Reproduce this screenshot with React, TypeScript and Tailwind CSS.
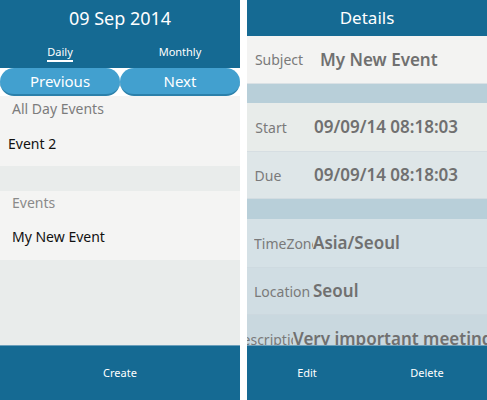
const font = { fontFamily: '"Noto Sans", "Open Sans", sans-serif' }

function DetailRow({
  label,
  value,
  bg,
  h,
  labelW,
  gap,
  align = 'justify-center',
}: {
  label: string
  value: string
  bg: string
  h: string
  labelW: string
  gap: string
  align?: string
}) {
  return (
    <div className={`${bg} ${h} shrink-0 flex items-center pl-[7px] whitespace-nowrap border-b border-[#c9d6dc]/60`}>
      <div className={`${labelW} overflow-hidden flex ${align} shrink-0`}>
        <span className="text-[14px] text-[#7a7a7a]">{label}</span>
      </div>
      <span className={`${gap} text-[17px] font-semibold text-[#707070]`}>{value}</span>
    </div>
  )
}

export default function App() {
  return (
    <div className="w-[487px] h-[400px] bg-white flex justify-between overflow-hidden" style={font}>
      {/* Day view */}
      <div className="w-[240px] h-full flex flex-col bg-[#f4f4f3]">
        <div className="h-[68px] bg-[#156a93] flex flex-col text-white">
          <div className="h-[37px] flex items-center justify-center text-[18px]">09 Sep 2014</div>
          <div className="flex-1 flex">
            <div className="flex-1 flex justify-center">
              <span className="text-[11px] pt-[8px] border-b-2 border-white h-[25px] leading-[14px]">Daily</span>
            </div>
            <div className="flex-1 flex justify-center">
              <span className="text-[11px] pt-[8px] leading-[14px]">Monthly</span>
            </div>
          </div>
        </div>
        <div className="h-[28px] flex bg-white">
          <button className="w-[120px] h-full rounded-full bg-[#42a0cf] border-b-2 border-[#2b80aa] text-white text-[15px]">
            Previous
          </button>
          <button className="w-[120px] h-full rounded-full bg-[#42a0cf] border-b-2 border-[#2b80aa] text-white text-[15px]">
            Next
          </button>
        </div>
        <div className="h-[24px] flex items-center px-[12px] text-[14px] text-[#7c7c7c]">All Day Events</div>
        <div className="h-[46px] flex items-center px-[8px] text-[14px] text-[#111]">Event 2</div>
        <div className="h-[25px] bg-[#e9eceb]" />
        <div className="h-[22px] flex items-center px-[12px] text-[14px] text-[#8a8a8a]">Events</div>
        <div className="h-[47px] flex items-center px-[12px] text-[14px] text-[#111]">My New Event</div>
        <div className="flex-1 bg-[#e9eceb]" />
        <div className="h-[55px] bg-[#156a93] border-t border-[#6b9fbb] flex items-center justify-center text-white text-[11px]">
          Create
        </div>
      </div>

      {/* Details */}
      <div className="w-[240px] h-full flex flex-col">
        <div className="h-[36px] bg-[#156a93] flex items-center justify-center text-white text-[17px]">Details</div>
        <div className="flex-1 flex flex-col overflow-hidden">
          <DetailRow label="Subject" value="My New Event" bg="bg-[#f3f3f2]" h="h-[48px]" labelW="w-[50px]" gap="ml-[16px]" />
          <div className="h-[19px] shrink-0 bg-[#b8cfd9]" />
          <DetailRow label="Start" value="09/09/14 08:18:03" bg="bg-[#e8ecea]" h="h-[49px]" labelW="w-[34px]" gap="ml-[26px]" />
          <DetailRow label="Due" value="09/09/14 08:18:03" bg="bg-[#dee6e8]" h="h-[47px]" labelW="w-[28px]" gap="ml-[32px]" />
          <div className="h-[20px] shrink-0 bg-[#b8cfd9]" />
          <DetailRow label="TimeZone" value="Asia/Seoul" bg="bg-[#d5e1e6]" h="h-[49px]" labelW="w-[59px]" gap="ml-0" align="justify-start" />
          <DetailRow label="Location" value="Seoul" bg="bg-[#d0dde3]" h="h-[47px]" labelW="w-[58px]" gap="ml-[1px]" align="justify-start" />
          <div className="h-[48px] shrink-0 bg-[#c9d8df] flex items-center whitespace-nowrap">
            <div className="w-[46px] overflow-hidden flex justify-center shrink-0">
              <span className="text-[14px] text-[#7a7a7a]">Description</span>
            </div>
            <span className="text-[17px] font-semibold text-[#707070]">Very important meeting</span>
          </div>
        </div>
        <div className="h-[55px] bg-[#156a93] border-t border-[#6b9fbb] flex text-white text-[11px]">
          <div className="flex-1 flex items-center justify-center">Edit</div>
          <div className="flex-1 flex items-center justify-center">Delete</div>
        </div>
      </div>
    </div>
  )
}
